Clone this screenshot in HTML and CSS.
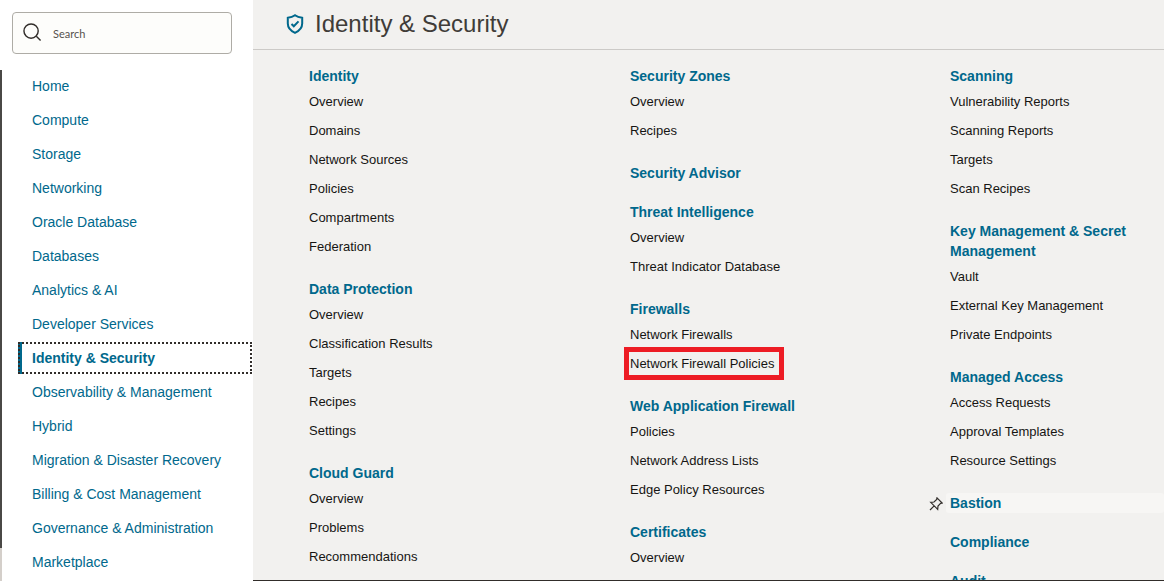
FILE: index.html
```html
<!DOCTYPE html>
<html lang="en">
<head>
<meta charset="utf-8">
<title>Identity &amp; Security</title>
<link rel="stylesheet" href="styles.css">
</head>
<body>
<div class="layout">
  <aside class="sidebar">
    <label class="search">
      <svg class="search-icon" viewBox="0 0 20 20" aria-hidden="true"><circle cx="8.500" cy="8.500" r="7.500"/><path d="M14 14l4.500 4.500"/></svg>
      <input class="search-input" type="text" placeholder="Search" aria-label="Search">
    </label>
    <div class="nav-row">
      <div class="rail"><div class="rail-thumb"></div></div>
      <nav class="nav">
        <a class="nav-link" href="#">Home</a>
        <a class="nav-link" href="#">Compute</a>
        <a class="nav-link" href="#">Storage</a>
        <a class="nav-link" href="#">Networking</a>
        <a class="nav-link" href="#">Oracle Database</a>
        <a class="nav-link" href="#">Databases</a>
        <a class="nav-link" href="#">Analytics &amp; AI</a>
        <a class="nav-link" href="#">Developer Services</a>
        <a class="nav-link nav-link-active" href="#">Identity &amp; Security</a>
        <a class="nav-link" href="#">Observability &amp; Management</a>
        <a class="nav-link" href="#">Hybrid</a>
        <a class="nav-link" href="#">Migration &amp; Disaster Recovery</a>
        <a class="nav-link" href="#">Billing &amp; Cost Management</a>
        <a class="nav-link" href="#">Governance &amp; Administration</a>
        <a class="nav-link" href="#">Marketplace</a>
      </nav>
    </div>
  </aside>
  <main class="panel">
    <header class="panel-header">
      <svg class="shield" viewBox="0 0 18 20" aria-hidden="true"><path d="M9 1.200C7 2.700 4.500 3.500 1.800 3.800V9.500c0 4.400 2.700 7.300 7.200 9.300C13.500 16.800 16.200 13.900 16.200 9.500V3.800C13.500 3.500 11 2.700 9 1.200z"/><path d="M5.500 10l2.300 2.300 4.700-4.900"/></svg>
      <h1 class="title">Identity &amp; Security</h1>
    </header>
    <div class="columns">
      <div class="column">
        <section class="group">
          <h2 class="heading"><a href="#">Identity</a></h2>
          <a class="link" href="#">Overview</a>
          <a class="link" href="#">Domains</a>
          <a class="link" href="#">Network Sources</a>
          <a class="link" href="#">Policies</a>
          <a class="link" href="#">Compartments</a>
          <a class="link" href="#">Federation</a>
        </section>
        <section class="group">
          <h2 class="heading"><a href="#">Data Protection</a></h2>
          <a class="link" href="#">Overview</a>
          <a class="link" href="#">Classification Results</a>
          <a class="link" href="#">Targets</a>
          <a class="link" href="#">Recipes</a>
          <a class="link" href="#">Settings</a>
        </section>
        <section class="group">
          <h2 class="heading"><a href="#">Cloud Guard</a></h2>
          <a class="link" href="#">Overview</a>
          <a class="link" href="#">Problems</a>
          <a class="link" href="#">Recommendations</a>
        </section>
      </div>
      <div class="column">
        <section class="group">
          <h2 class="heading"><a href="#">Security Zones</a></h2>
          <a class="link" href="#">Overview</a>
          <a class="link" href="#">Recipes</a>
        </section>
        <section class="group">
          <h2 class="heading"><a href="#">Security Advisor</a></h2>
        </section>
        <section class="group">
          <h2 class="heading"><a href="#">Threat Intelligence</a></h2>
          <a class="link" href="#">Overview</a>
          <a class="link" href="#">Threat Indicator Database</a>
        </section>
        <section class="group">
          <h2 class="heading"><a href="#">Firewalls</a></h2>
          <a class="link" href="#">Network Firewalls</a>
          <a class="link link-marked" href="#">Network Firewall Policies</a>
        </section>
        <section class="group">
          <h2 class="heading"><a href="#">Web Application Firewall</a></h2>
          <a class="link" href="#">Policies</a>
          <a class="link" href="#">Network Address Lists</a>
          <a class="link" href="#">Edge Policy Resources</a>
        </section>
        <section class="group">
          <h2 class="heading"><a href="#">Certificates</a></h2>
          <a class="link" href="#">Overview</a>
        </section>
      </div>
      <div class="column">
        <section class="group">
          <h2 class="heading"><a href="#">Scanning</a></h2>
          <a class="link" href="#">Vulnerability Reports</a>
          <a class="link" href="#">Scanning Reports</a>
          <a class="link" href="#">Targets</a>
          <a class="link" href="#">Scan Recipes</a>
        </section>
        <section class="group">
          <h2 class="heading"><a href="#">Key Management &amp; Secret Management</a></h2>
          <a class="link" href="#">Vault</a>
          <a class="link" href="#">External Key Management</a>
          <a class="link" href="#">Private Endpoints</a>
        </section>
        <section class="group">
          <h2 class="heading"><a href="#">Managed Access</a></h2>
          <a class="link" href="#">Access Requests</a>
          <a class="link" href="#">Approval Templates</a>
          <a class="link" href="#">Resource Settings</a>
        </section>
        <section class="group">
          <h2 class="heading heading-hover">
            <svg class="pin" viewBox="0 0 14 14" aria-hidden="true"><path d="M8 .8L13.200 6 11.600 6.300 9 9l-.3 3.300L1.700 5.300 5 5 7.700 2.400zM5.200 8.800L1 13"/></svg>
            <a href="#">Bastion</a>
          </h2>
        </section>
        <section class="group">
          <h2 class="heading"><a href="#">Compliance</a></h2>
        </section>
        <section class="group">
          <h2 class="heading"><a href="#">Audit</a></h2>
        </section>
      </div>
    </div>
  </main>
</div>
</body>
</html>
```
FILE: styles.css
```css
* {
  box-sizing: border-box;
}

body {
  margin: 0;
  background: #fff;
  color: #161513;
  font-family: "Liberation Sans", Arial, sans-serif;
}

a {
  color: inherit;
  text-decoration: none;
}

.layout {
  display: flex;
  height: 100vh;
  overflow: hidden;
}

.sidebar {
  display: flex;
  flex-direction: column;
  flex: none;
  width: 253px;
}

.search {
  display: flex;
  align-items: center;
  flex: none;
  gap: 11px;
  height: 42px;
  margin: 12px 21px 16px 12px;
  padding: 0 10px 2px;
  border: 1px solid #aeaca6;
  border-radius: 4px;
  background: #fdfdfb;
}

.search-icon {
  flex: none;
  width: 19px;
  height: 19px;
  fill: none;
  stroke: #312d2a;
  stroke-width: 1.5;
}

.search-input {
  flex: 1;
  min-width: 0;
  padding: 2px 0 0;
  border: 0;
  outline: 0;
  background: none;
  color: #312d2a;
  font: 11px Lato, sans-serif;
}

.search-input::placeholder {
  color: #56524e;
}

.nav-row {
  display: flex;
  flex: 1;
  min-height: 0;
}

.rail {
  width: 2px;
  background: #d4cfca;
}

.rail-thumb {
  height: 478px;
  background: #4a4846;
}

.nav {
  display: flex;
  flex: 1;
  flex-direction: column;
  gap: 2px;
  padding: 0 1px 0 16px;
}

.nav-link {
  flex: none;
  padding-left: 14px;
  color: #00688c;
  font-size: 14px;
  line-height: 32px;
}

.nav-link-active {
  height: 32px;
  padding-left: 10px;
  border-left: 4px solid #00688c;
  outline: 2px dotted #312d2a;
  outline-offset: -2px;
  font-weight: bold;
}

.panel {
  flex: 1;
  min-width: 0;
  overflow: hidden;
  border-bottom: 1px solid #312d2a;
  background: #f2f1ef;
}

.panel-header {
  display: flex;
  align-items: center;
  gap: 11px;
  height: 50px;
  padding: 0 33px 2px;
  border-bottom: 1px solid #cccac7;
}

.shield {
  width: 18px;
  height: 20px;
  fill: none;
  stroke: #00688c;
  stroke-width: 2;
}

.title {
  margin: 0;
  color: #403c38;
  font-size: 24px;
  font-weight: normal;
}

.columns {
  display: grid;
  grid-template-columns: 321fr 320fr 218fr;
  padding: 16px 0 0 52px;
}

.column {
  display: flex;
  flex-direction: column;
  gap: 18px;
  min-width: 0;
}

.group {
  display: flex;
  flex-direction: column;
  align-items: stretch;
}

.heading {
  margin: 0 0 1px;
  padding: 0 4px;
  color: #00688c;
  font-size: 14px;
  line-height: 20px;
}

.heading-hover {
  position: relative;
  border-radius: 3px;
  background: #f7f6f4;
}

.pin {
  position: absolute;
  top: 4px;
  left: -17px;
  width: 14px;
  height: 14px;
  fill: none;
  stroke: #312d2a;
  stroke-width: 1.2;
}

.link {
  padding: 0 4px;
  font-size: 13px;
  line-height: 29px;
}

.link-marked {
  align-self: flex-start;
  height: 29px;
  padding-right: 8px;
  outline: 5px solid #ed1c24;
  outline-offset: -3px;
}
```
